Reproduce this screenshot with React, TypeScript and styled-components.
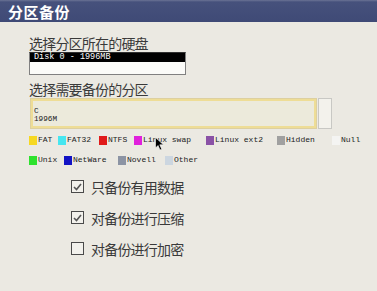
import React from "react";
import styled, { createGlobalStyle } from "styled-components";

const Global = createGlobalStyle`
  html, body { margin: 0; padding: 0; background: #ebe9e2; }
  body { font-family: "Noto Sans CJK SC", "Noto Sans", sans-serif; }
`;

const Window = styled.div`
  position: relative;
  width: 377px;
  height: 291px;
  background: #ebe9e2;
  overflow: hidden;
`;

const TitleBar = styled.div`
  height: 22px;
  display: flex;
  align-items: center;
  padding-left: 8px;
  background: linear-gradient(#6b7395 0px, #46517c 2px, #3f4a76 100%);
  color: #ffffff;
  font-size: 15px;
  font-weight: 700;
  letter-spacing: 0.5px;
  box-sizing: border-box;
`;

const Content = styled.div`
  padding: 13px 0 0 29px;
  display: flex;
  flex-direction: column;
`;

const Label = styled.div<{ $mt?: number }>`
  margin-top: ${(p) => p.$mt ?? 0}px;
  font-size: 14px;
  line-height: 16px;
  height: 16px;
  color: #3a3a3a;
  letter-spacing: -0.8px;
`;

const DiskList = styled.div`
  margin-top: 1px;
  width: 157px;
  height: 23px;
  box-sizing: border-box;
  border: 1px solid #808080;
  border-top-color: #303030;
  background: #fbfbf8;
`;

const DiskRow = styled.div`
  height: 9px;
  background: #000;
  color: #fff;
  font-family: "Liberation Mono", monospace;
  font-size: 8.5px;
  line-height: 9px;
  padding-left: 4px;
  white-space: pre;
`;

const PartitionRow = styled.div`
  margin-top: 1px;
  display: flex;
  height: 31px;
  margin-left: 1px;
`;

const PartitionBox = styled.div`
  width: 287px;
  box-sizing: border-box;
  border: 3px solid #eedd96;
  outline: 1px solid #ddd0a0;
  outline-offset: -1px;
  background: #eceadb;
  padding: 6px 0 0 1px;
  font-family: "Liberation Mono", monospace;
  font-size: 7.7px;
  line-height: 8px;
  color: #222;
`;

const ScrollBox = styled.div`
  width: 14px;
  margin-left: 1px;
  box-sizing: border-box;
  border: 1px solid #c8c8c4;
  background: #f3f2ec;
`;

const LegendRow = styled.div<{ $mt: number }>`
  margin-top: ${(p) => p.$mt}px;
  display: flex;
  height: 10px;
`;

const LegendItem = styled.div<{ $w: number }>`
  width: ${(p) => p.$w}px;
  display: flex;
  align-items: center;
  flex-shrink: 0;
`;

const Swatch = styled.span<{ $c: string }>`
  width: 8px;
  height: 9px;
  background: ${(p) => p.$c};
  margin-right: 1px;
`;

const LegendText = styled.span`
  font-family: "Liberation Mono", monospace;
  font-size: 8px;
  line-height: 10px;
  color: #222;
  white-space: pre;
`;

const Options = styled.div`
  margin-top: 14px;
  padding-left: 42px;
  display: flex;
  flex-direction: column;
  gap: 16px;
`;

const OptionRow = styled.label`
  display: flex;
  align-items: center;
  height: 15px;
  gap: 7px;
`;

const Box = styled.span`
  width: 13px;
  height: 13px;
  box-sizing: border-box;
  border: 1px solid #4a4a4a;
  background: #f2f1ec;
  display: flex;
  align-items: center;
  justify-content: center;
`;

const OptionText = styled.span`
  font-size: 14px;
  line-height: 16px;
  color: #3a3a3a;
  letter-spacing: -0.8px;
`;

const Cursor = styled.svg`
  position: absolute;
  left: 155px;
  top: 137px;
`;

const legend1 = [
  { c: "#f6d822", t: "FAT", w: 29 },
  { c: "#46e6f0", t: "FAT32", w: 41 },
  { c: "#e01a1a", t: "NTFS", w: 35 },
  { c: "#e020dc", t: "Linux swap", w: 72 },
  { c: "#8a52a6", t: "Linux ext2", w: 71 },
  { c: "#a0a0a0", t: "Hidden", w: 55 },
  { c: "#f4f4f2", t: "Null", w: 40 },
];

const legend2 = [
  { c: "#2ee22e", t: "Unix", w: 35 },
  { c: "#1212c4", t: "NetWare", w: 54 },
  { c: "#8c94a4", t: "Novell", w: 47 },
  { c: "#ccd6e0", t: "Other", w: 50 },
];

const options = [
  { t: "只备份有用数据", on: true },
  { t: "对备份进行压缩", on: true },
  { t: "对备份进行加密", on: false },
];

const Check = () => (
  <svg width="9" height="8" viewBox="0 0 9 8">
    <path d="M1 4 L3.5 6.5 L8 1" stroke="#555" strokeWidth="1.6" fill="none" />
  </svg>
);

export default function App() {
  return (
    <Window>
      <Global />
      <TitleBar>分区备份</TitleBar>
      <Content>
        <Label>选择分区所在的硬盘</Label>
        <DiskList>
          <DiskRow>Disk 0 - 1996MB</DiskRow>
        </DiskList>
        <Label $mt={6}>选择需要备份的分区</Label>
        <PartitionRow>
          <PartitionBox>
            C<br />1996M
          </PartitionBox>
          <ScrollBox />
        </PartitionRow>
        <LegendRow $mt={6}>
          {legend1.map((l) => (
            <LegendItem key={l.t} $w={l.w}>
              <Swatch $c={l.c} />
              <LegendText>{l.t}</LegendText>
            </LegendItem>
          ))}
        </LegendRow>
        <LegendRow $mt={10}>
          {legend2.map((l) => (
            <LegendItem key={l.t} $w={l.w}>
              <Swatch $c={l.c} />
              <LegendText>{l.t}</LegendText>
            </LegendItem>
          ))}
        </LegendRow>
        <Options>
          {options.map((o) => (
            <OptionRow key={o.t}>
              <Box>{o.on && <Check />}</Box>
              <OptionText>{o.t}</OptionText>
            </OptionRow>
          ))}
        </Options>
      </Content>
      <Cursor width="10" height="15" viewBox="0 0 10 15">
        <path d="M0.5 0.5 L0.5 11 L3 8.5 L5 13 L6.8 12.2 L4.8 7.8 L8.5 7.8 Z" fill="#000" stroke="#fff" strokeWidth="0.6" />
      </Cursor>
    </Window>
  );
}
